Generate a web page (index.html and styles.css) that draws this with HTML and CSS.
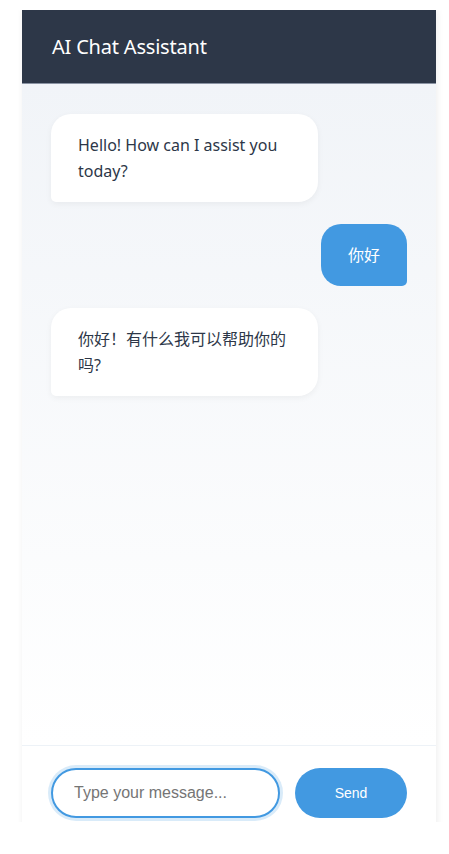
FILE: index.html
```html
<!DOCTYPE html>
<html lang="en">
<head>
<meta charset="utf-8">
<title>AI Chat Assistant</title>
<link rel="stylesheet" href="styles.css">
</head>
<body>
<div class="frame">
  <div class="app">
    <header class="header">AI Chat Assistant</header>
    <main class="messages">
      <div class="msg bot">Hello! How can I assist you today?</div>
      <div class="msg user">你好</div>
      <div class="msg bot">你好！有什么我可以帮助你的吗?</div>
    </main>
    <div class="composer">
      <input class="field" type="text" placeholder="Type your message...">
      <button class="send" type="button">Send</button>
    </div>
  </div>
</div>
</body>
</html>
```
FILE: styles.css
```css
html, body {
  margin: 0;
  padding: 0;
  background: #ffffff;
}
.frame {
  margin: 10px 0 0 18px;
  padding: 0 8px 0 4px;
  width: 414px;
  height: 812px;
  overflow: hidden;
}
.app {
  width: 414px;
  height: 830px;
  display: flex;
  flex-direction: column;
  background: #ffffff;
  box-shadow: 1px 0 7px rgba(0, 0, 0, 0.07);
  font-family: "Noto Sans", "Noto Sans CJK SC", sans-serif;
}
.header {
  height: 74px;
  box-sizing: border-box;
  padding: 0 30px;
  display: flex;
  align-items: center;
  background: #2d3748;
  color: #ffffff;
  font-size: 20px;
  letter-spacing: -0.2px;
  border-bottom: 1px solid #8a93a3;
}
.messages {
  flex: 1;
  display: flex;
  flex-direction: column;
  align-items: flex-start;
  gap: 22px;
  padding: 30px 29px 0 29px;
  background: linear-gradient(to bottom, #f1f4f8, #ffffff);
}
.msg {
  max-width: 75%;
  box-sizing: border-box;
  padding: 18px 27px;
  font-size: 16px;
  line-height: 26px;
  border-radius: 20px;
}
.bot {
  background: #ffffff;
  color: #2d3748;
  width: 75%;
  border-bottom-left-radius: 5px;
  box-shadow: 0 2px 6px rgba(0, 0, 0, 0.05);
}
.user {
  align-self: flex-end;
  background: #4299e1;
  color: #ffffff;
  border-bottom-right-radius: 5px;
}
.composer {
  display: flex;
  gap: 15px;
  padding: 22px 29px;
  border-top: 1px solid #edf2f7;
  background: #ffffff;
}
.field {
  flex: 1;
  min-width: 0;
  height: 50px;
  box-sizing: border-box;
  padding: 0 21px;
  border: 2px solid #4299e1;
  border-radius: 25px;
  font-family: "Liberation Sans", Arial, sans-serif;
  font-size: 16px;
  color: #2d3748;
  outline: none;
  box-shadow: 0 0 0 3px rgba(66, 153, 225, 0.2);
}
.field::placeholder {
  color: #757575;
}
.send {
  width: 112px;
  height: 50px;
  border: none;
  border-radius: 25px;
  background: #4299e1;
  color: #ffffff;
  font-family: "Liberation Sans", Arial, sans-serif;
  font-size: 14px;
}
```
